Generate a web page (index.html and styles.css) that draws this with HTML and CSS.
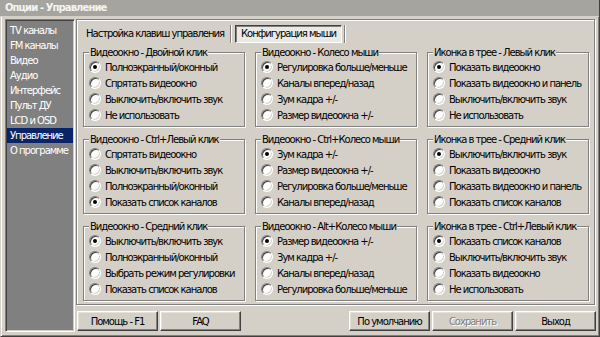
FILE: index.html
```html
<!DOCTYPE html>
<html>
<head>
    <meta charset="utf-8">
    <link rel="stylesheet" href="styles.css">
</head>
<body>

    <div class="window">
        <div class="titlebar">Опции - Управление</div>

        <div class="body">
            <ul class="nav">
                <li>TV каналы</li>
                <li>FM каналы</li>
                <li>Видео</li>
                <li>Аудио</li>
                <li>Интерфейс</li>
                <li>Пульт ДУ</li>
                <li>LCD и OSD</li>
                <li class="active">Управление</li>
                <li>О программе</li>
            </ul>

            <div class="pane">
                <div class="panel">
                    <div class="tabs">
                        <span class="tab">Настройка клавиш управления</span>
                        <span class="sep"></span>
                        <span class="tab pressed">Конфигурация мыши</span>
                        <span class="sep"></span>
                    </div>

                    <div class="groups">
                        <fieldset class="group">
                            <legend>Видеоокно - Двойной клик</legend>
                            <label class="opt checked"><span class="radio"></span>Полноэкранный/оконный</label>
                            <label class="opt"><span class="radio"></span>Спрятать видеоокно</label>
                            <label class="opt"><span class="radio"></span>Выключить/включить звук</label>
                            <label class="opt"><span class="radio"></span>Не использовать</label>
                        </fieldset>
                        <fieldset class="group">
                            <legend>Видеоокно - Колесо мыши</legend>
                            <label class="opt checked"><span class="radio"></span>Регулировка больше/меньше</label>
                            <label class="opt"><span class="radio"></span>Каналы вперед/назад</label>
                            <label class="opt"><span class="radio"></span>Зум кадра +/-</label>
                            <label class="opt"><span class="radio"></span>Размер видеоокна +/-</label>
                        </fieldset>
                        <fieldset class="group">
                            <legend>Иконка в трее - Левый клик</legend>
                            <label class="opt checked"><span class="radio"></span>Показать видеоокно</label>
                            <label class="opt"><span class="radio"></span>Показать видеоокно и панель</label>
                            <label class="opt"><span class="radio"></span>Выключить/включить звук</label>
                            <label class="opt"><span class="radio"></span>Не использовать</label>
                        </fieldset>

                        <fieldset class="group">
                            <legend>Видеоокно - Ctrl+Левый клик</legend>
                            <label class="opt"><span class="radio"></span>Спрятать видеоокно</label>
                            <label class="opt"><span class="radio"></span>Выключить/включить звук</label>
                            <label class="opt"><span class="radio"></span>Полноэкранный/оконный</label>
                            <label class="opt checked"><span class="radio"></span>Показать список каналов</label>
                        </fieldset>
                        <fieldset class="group">
                            <legend>Видеоокно - Ctrl+Колесо мыши</legend>
                            <label class="opt checked"><span class="radio"></span>Зум кадра +/-</label>
                            <label class="opt"><span class="radio"></span>Размер видеоокна +/-</label>
                            <label class="opt"><span class="radio"></span>Регулировка больше/меньше</label>
                            <label class="opt"><span class="radio"></span>Каналы вперед/назад</label>
                        </fieldset>
                        <fieldset class="group">
                            <legend>Иконка в трее - Средний клик</legend>
                            <label class="opt checked"><span class="radio"></span>Выключить/включить звук</label>
                            <label class="opt"><span class="radio"></span>Показать видеоокно</label>
                            <label class="opt"><span class="radio"></span>Показать видеоокно и панель</label>
                            <label class="opt"><span class="radio"></span>Показать список каналов</label>
                        </fieldset>

                        <fieldset class="group">
                            <legend>Видеоокно - Средний клик</legend>
                            <label class="opt checked"><span class="radio"></span>Выключить/включить звук</label>
                            <label class="opt"><span class="radio"></span>Полноэкранный/оконный</label>
                            <label class="opt"><span class="radio"></span>Выбрать режим регулировки</label>
                            <label class="opt"><span class="radio"></span>Показать список каналов</label>
                        </fieldset>
                        <fieldset class="group">
                            <legend>Видеоокно - Alt+Колесо мыши</legend>
                            <label class="opt checked"><span class="radio"></span>Размер видеоокна +/-</label>
                            <label class="opt"><span class="radio"></span>Зум кадра +/-</label>
                            <label class="opt"><span class="radio"></span>Каналы вперед/назад</label>
                            <label class="opt"><span class="radio"></span>Регулировка больше/меньше</label>
                        </fieldset>
                        <fieldset class="group">
                            <legend>Иконка в трее - Ctrl+Левый клик</legend>
                            <label class="opt checked"><span class="radio"></span>Показать список каналов</label>
                            <label class="opt"><span class="radio"></span>Выключить/включить звук</label>
                            <label class="opt"><span class="radio"></span>Показать видеоокно</label>
                            <label class="opt"><span class="radio"></span>Не использовать</label>
                        </fieldset>
                    </div>
                </div>

                <div class="buttons">
                    <button class="btn">Помощь - F1</button>
                    <button class="btn">FAQ</button>
                    <span class="spacer"></span>
                    <button class="btn">По умолчанию</button>
                    <button class="btn disabled">Сохранить</button>
                    <button class="btn">Выход</button>
                </div>
            </div>
        </div>
    </div>

</body>
</html>
```

FILE: styles.css
```css
body {
    margin: 0;
    background-color: #d4d0c8;
    font-family: "DejaVu Sans", sans-serif;
    font-size: 10px;
    letter-spacing: -1px;
    color: #000;
}
.window {
    height: 337px;
    box-sizing: border-box;
    display: flex;
    flex-direction: column;
    border-left: 1px solid #d4d0c8;
    border-right: 1px solid #404040;
    border-bottom: 1px solid #404040;
    box-shadow: inset 1px 0 #fff, inset -1px -1px #808080;
}
.titlebar {
    height: 16px;
    line-height: 16px;
    margin-left: -1px;
    padding-left: 5px;
    background-color: #a6a49f;
    color: #f4f4f2;
    font-weight: bold;
    letter-spacing: -0.9px;
    border-bottom: 1px solid #d4d0c8;
}
.body {
    flex: 1;
    display: flex;
    gap: 1px;
    padding: 2px 1px 4px 4px;
}

/* left list */
.nav {
    flex: none;
    width: 70px;
    box-sizing: border-box;
    margin: 0;
    padding: 3px 0 0;
    list-style: none;
    background-color: #808080;
    border: 1px solid;
    border-color: #808080 #fff #fff #808080;
    box-shadow: inset 1px 1px #404040, inset -1px -1px #d4d0c8;
}
.nav li {
    height: 15px;
    line-height: 15px;
    margin: 0 1px;
    padding-left: 3px;
    color: #fff;
    white-space: nowrap;
}
.nav li.active {
    background-color: #0a246a;
}

/* right side */
.pane {
    flex: 1;
    min-width: 0;
    display: flex;
    flex-direction: column;
}
.panel {
    height: 286px;
    box-sizing: border-box;
    margin-right: 3px;
    padding: 5px 5px 3px 6px;
    border: 1px solid #808080;
    box-shadow: inset 1px 1px #fff, 1px 1px #fff;
}
.tabs {
    display: flex;
    align-items: center;
    height: 18px;
    margin-left: -3px;
}
.tab {
    height: 16px;
    line-height: 16px;
    padding: 0 5px;
    border: 1px solid transparent;
    white-space: nowrap;
}
.tab.pressed {
    padding: 0 5px;
    background-color: #ebe9e4;
    border-color: #404040 #fff #fff #404040;
    box-shadow: inset 1px 1px #808080;
}
.sep {
    height: 18px;
    margin: 0 3px 0 0;
    border-left: 1px solid #808080;
    border-right: 1px solid #fff;
}
.tab.pressed + .sep {
    margin-left: 2px;
}
.groups {
    display: grid;
    grid-template-columns: repeat(3, minmax(0, 1fr));
    grid-auto-rows: 81px;
    column-gap: 10px;
    row-gap: 6px;
    margin-top: 3px;
}
.group {
    margin: 0;
    min-width: 0;
    padding: 0 4px 3px 5px;
    border: 1px solid #808080;
    box-shadow: inset 1px 1px #fff, 1px 1px #fff;
}
.group legend {
    padding: 0 1px;
    line-height: 13px;
    background-color: #d4d0c8;
    white-space: nowrap;
}
.opt {
    display: flex;
    align-items: center;
    gap: 4px;
    height: 16px;
    white-space: nowrap;
}
.radio {
    flex: none;
    display: flex;
    align-items: center;
    justify-content: center;
    width: 12px;
    height: 12px;
    box-sizing: border-box;
    border-radius: 50%;
    background-color: #fff;
    border: 1px solid;
    border-color: #808080 #fff #fff #808080;
    box-shadow: inset 1px 1px #404040, inset -1px -1px #d4d0c8;
}
.checked .radio::after {
    content: "";
    width: 4px;
    height: 4px;
    border-radius: 50%;
    background-color: #000;
}

/* bottom buttons */
.buttons {
    display: flex;
    gap: 2px;
    margin: 6px 2px 0 1px;
}
.spacer {
    flex: 1;
}
.btn {
    width: 81px;
    height: 20px;
    padding: 0;
    font: inherit;
    letter-spacing: inherit;
    color: #000;
    background-color: #d4d0c8;
    border: 1px solid;
    border-color: #fff #404040 #404040 #fff;
    box-shadow: inset -1px -1px #808080, inset 1px 1px #e4e2dc;
}
.btn.disabled {
    color: #808080;
    text-shadow: 1px 1px #fff;
}
```
